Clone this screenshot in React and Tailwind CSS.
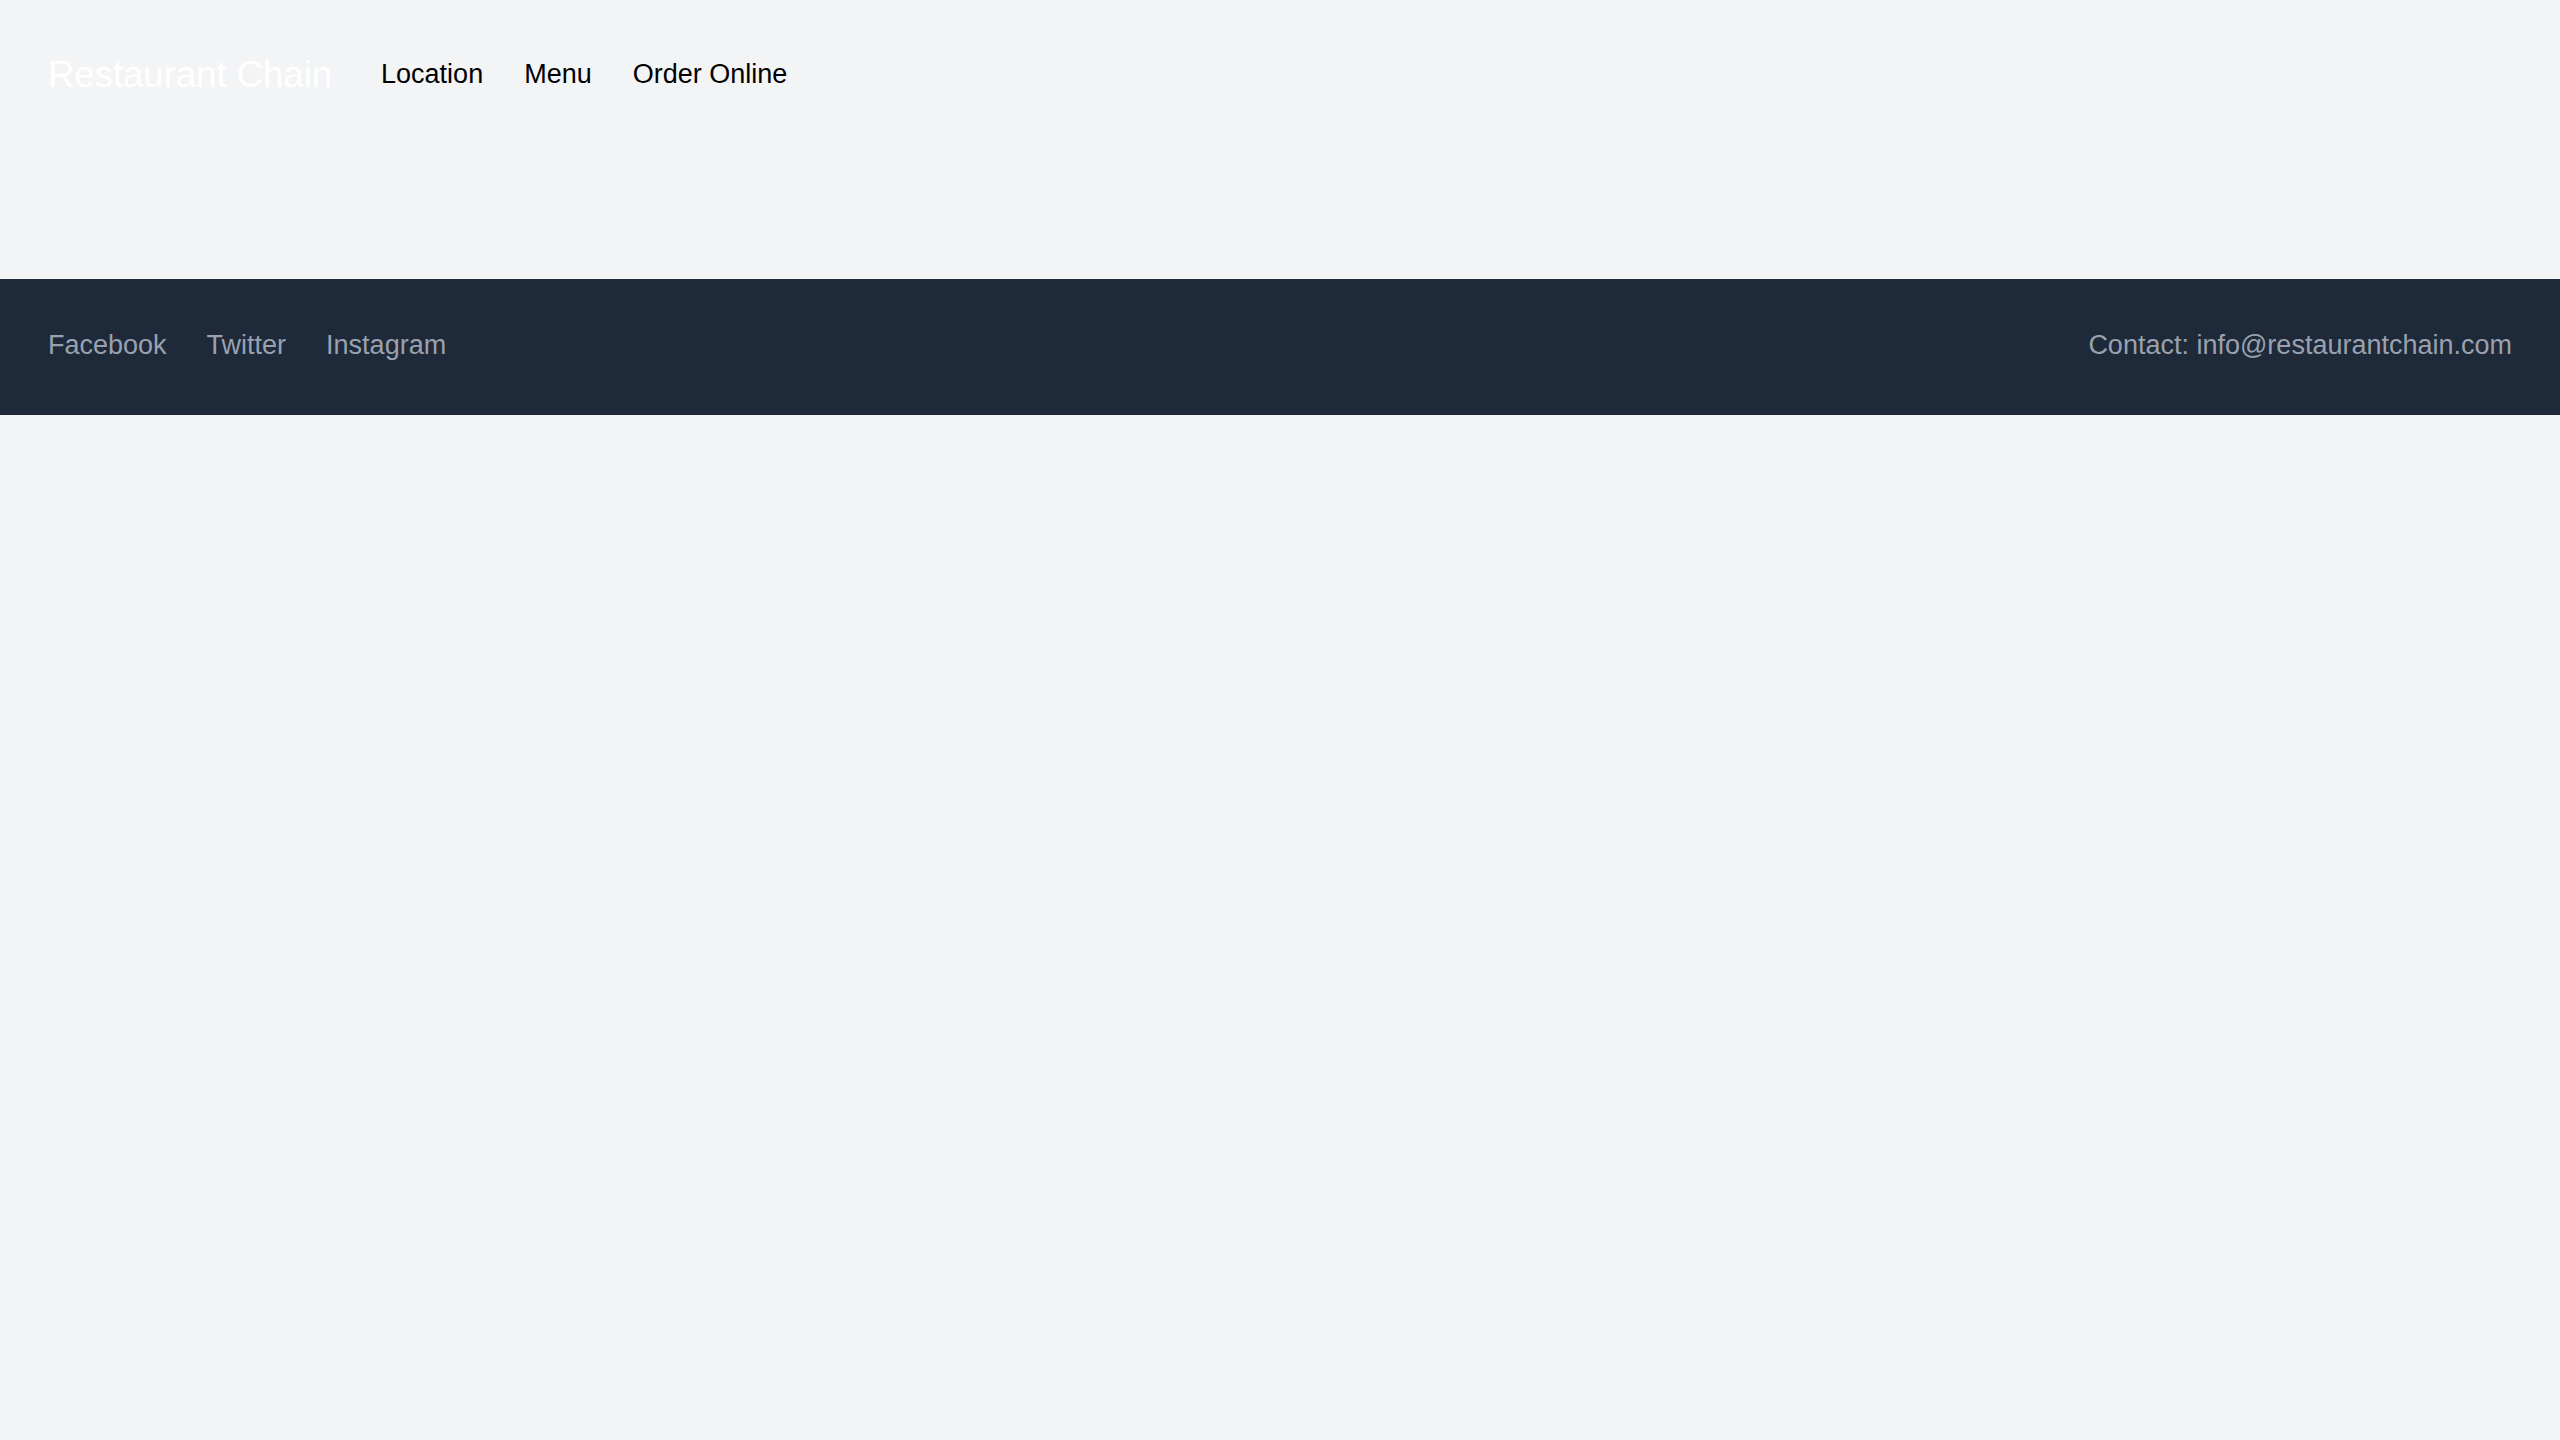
export default function App() {
  const navLinks = ["Location", "Menu", "Order Online"];
  const socials = ["Facebook", "Twitter", "Instagram"];

  return (
    <div className="min-h-screen bg-gray-100 font-['Liberation_Sans',Arial,sans-serif]">
      {/* header */}
      <header className="flex items-center px-12 pt-12 pb-12">
        <h1 className="text-[36.5px] leading-[54px] text-white mr-[49px]">
          Restaurant Chain
        </h1>
        <nav className="flex items-center gap-[41px] mb-[3px]">
          {navLinks.map((link) => (
            <a key={link} href="#" className="text-[27px] leading-[40px] text-black">
              {link}
            </a>
          ))}
        </nav>
      </header>

      {/* main (empty) */}
      <main className="h-[129px]"></main>

      {/* footer */}
      <footer className="bg-gray-800 h-[136px] px-12 pb-[4px] flex items-center justify-between text-[27px] leading-[40px] text-gray-400">
        <div className="flex items-center gap-[40px]">
          {socials.map((s) => (
            <a key={s} href="#">
              {s}
            </a>
          ))}
        </div>
        <p>Contact: info@restaurantchain.com</p>
      </footer>
    </div>
  );
}
